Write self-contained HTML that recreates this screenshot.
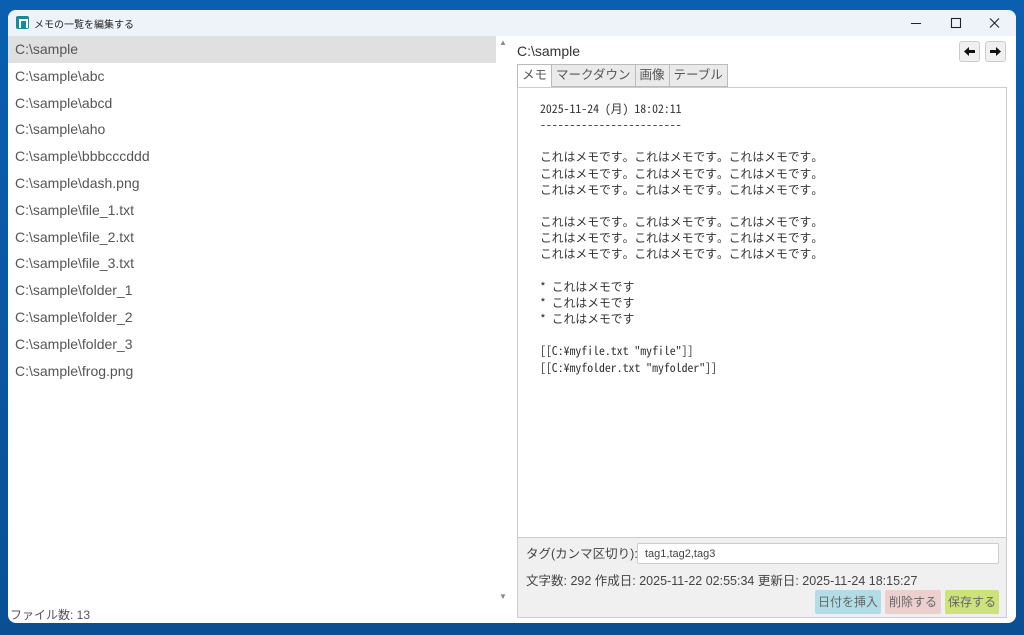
<!DOCTYPE html>
<html><head><meta charset="utf-8"><style>
*{margin:0;padding:0;box-sizing:border-box}
body{width:1024px;height:635px;background:linear-gradient(180deg,#0a5fb0,#0a4f94);position:relative;overflow:hidden;font-family:"Liberation Sans","Noto Sans CJK JP",sans-serif;color:#444}
.win{position:absolute;left:8px;top:10px;width:1008px;height:613px;background:#fff;border-radius:8px;overflow:hidden}
.tb{height:26px;background:#eef3fa;position:relative;font-size:10px;color:#222}
.tb .ic{position:absolute;left:8px;top:6px;width:13px;height:13px;background:#1a8a9a;border-radius:2px}
.tb .ic:after{content:"";position:absolute;left:3px;top:3px;width:5px;height:7px;border:2px solid #fff;border-bottom:none}
.tb .t{position:absolute;left:26px;top:6px}
.list{position:absolute;left:0;top:26px;width:488px}
.row{height:26.8px;line-height:26px;padding-left:7px;font-size:14px;color:#555}
.row.sel{background:#e0e0e0}
.sb{position:absolute;left:489px;top:26px;width:12px;height:570px;font-size:8px;color:#888;text-align:center}
.cnt{position:absolute;left:2px;top:596px;font-size:12px;color:#555}
.path{position:absolute;left:509px;top:33px;font-size:14px;color:#333}
.nav{position:absolute;top:31px;width:21px;height:21px;border:1px solid #ccc;border-radius:3px;background:#f0f0f0}
.nav svg{position:absolute;left:3px;top:3px}
.tabs{position:absolute;left:509px;top:54px;font-size:12.5px;display:flex}
.tab{height:23px;line-height:21px;padding:0 4px;border:1px solid #bbb;background:#eaeaea;color:#555;margin-right:-1px}
.tab.a{background:#fff;border-bottom-color:#fff;height:24px}
.memo{position:absolute;left:509px;top:77px;width:490px;height:451px;border:1px solid #ccc;background:#fff;font-family:"Noto Sans Mono CJK JP","Noto Sans CJK JP",monospace;font-size:11.8px;color:#333;padding:13px 0 0 22px;line-height:16.15px;white-space:pre}
.bot{position:absolute;left:509px;top:528px;width:490px;height:80px;background:#f0f0f0;border:1px solid #ccc;border-top:none}
.lbl{position:absolute;left:8px;top:5px;font-size:12.5px;color:#444}
.inp{position:absolute;left:119px;top:5px;width:362px;height:21px;border:1px solid #ccc;background:#fff;font-size:11px;padding:4px 7px;color:#444;border-radius:2px}
.info{position:absolute;left:8px;top:32px;font-size:12.5px;color:#444}
.btn{position:absolute;top:52px;height:24px;line-height:24px;font-size:12px;text-align:center;border-radius:2px;color:#666;white-space:nowrap}
</style></head><body>
<div class="win">
<div class="tb"><div class="ic"></div><div class="t">メモの一覧を編集する</div>
<svg style="position:absolute;left:900px;top:7px" width="100" height="12" stroke="#222" stroke-width="1.1" fill="none"><path d="M3 6.5h10"/><rect x="43.5" y="1.5" width="9" height="9"/><path d="M82 1.5l9 9M91 1.5l-9 9"/></svg></div>
<div class="list">
<div class="row sel">C:\sample</div>
<div class="row">C:\sample\abc</div>
<div class="row">C:\sample\abcd</div>
<div class="row">C:\sample\aho</div>
<div class="row">C:\sample\bbbcccddd</div>
<div class="row">C:\sample\dash.png</div>
<div class="row">C:\sample\file_1.txt</div>
<div class="row">C:\sample\file_2.txt</div>
<div class="row">C:\sample\file_3.txt</div>
<div class="row">C:\sample\folder_1</div>
<div class="row">C:\sample\folder_2</div>
<div class="row">C:\sample\folder_3</div>
<div class="row">C:\sample\frog.png</div>
</div>
<div class="sb"><div style="position:absolute;top:2px;width:12px">▲</div><div style="position:absolute;top:556px;width:12px">▼</div></div>
<div class="cnt">ファイル数: 13</div>
<div class="path">C:\sample</div>
<div class="nav" style="left:951px"><svg width="13" height="13"><path d="M1 6.5L6 2v3h6v3H6v3z" fill="#111"/></svg></div>
<div class="nav" style="left:977px"><svg width="13" height="13"><path d="M12 6.5L7 2v3H1v3h6v3z" fill="#111"/></svg></div>
<div class="tabs"><div class="tab a">メモ</div><div class="tab">マークダウン</div><div class="tab">画像</div><div class="tab">テーブル</div></div>
<div class="memo">2025-11-24 (月) 18:02:11
------------------------

これはメモです。これはメモです。これはメモです。
これはメモです。これはメモです。これはメモです。
これはメモです。これはメモです。これはメモです。

これはメモです。これはメモです。これはメモです。
これはメモです。これはメモです。これはメモです。
これはメモです。これはメモです。これはメモです。

* これはメモです
* これはメモです
* これはメモです

[[C:¥myfile.txt "myfile"]]
[[C:¥myfolder.txt "myfolder"]]</div>
<div class="bot">
<div class="lbl">タグ(カンマ区切り):</div>
<div class="inp">tag1,tag2,tag3</div>
<div class="info">文字数: 292 作成日: 2025-11-22 02:55:34 更新日: 2025-11-24 18:15:27</div>
<div class="btn" style="left:297px;width:66px;background:#b3dde6">日付を挿入</div>
<div class="btn" style="left:367px;width:56px;background:#eccfcf">削除する</div>
<div class="btn" style="left:427px;width:54px;background:#cde27a">保存する</div>
</div>
</div>
</body></html>
